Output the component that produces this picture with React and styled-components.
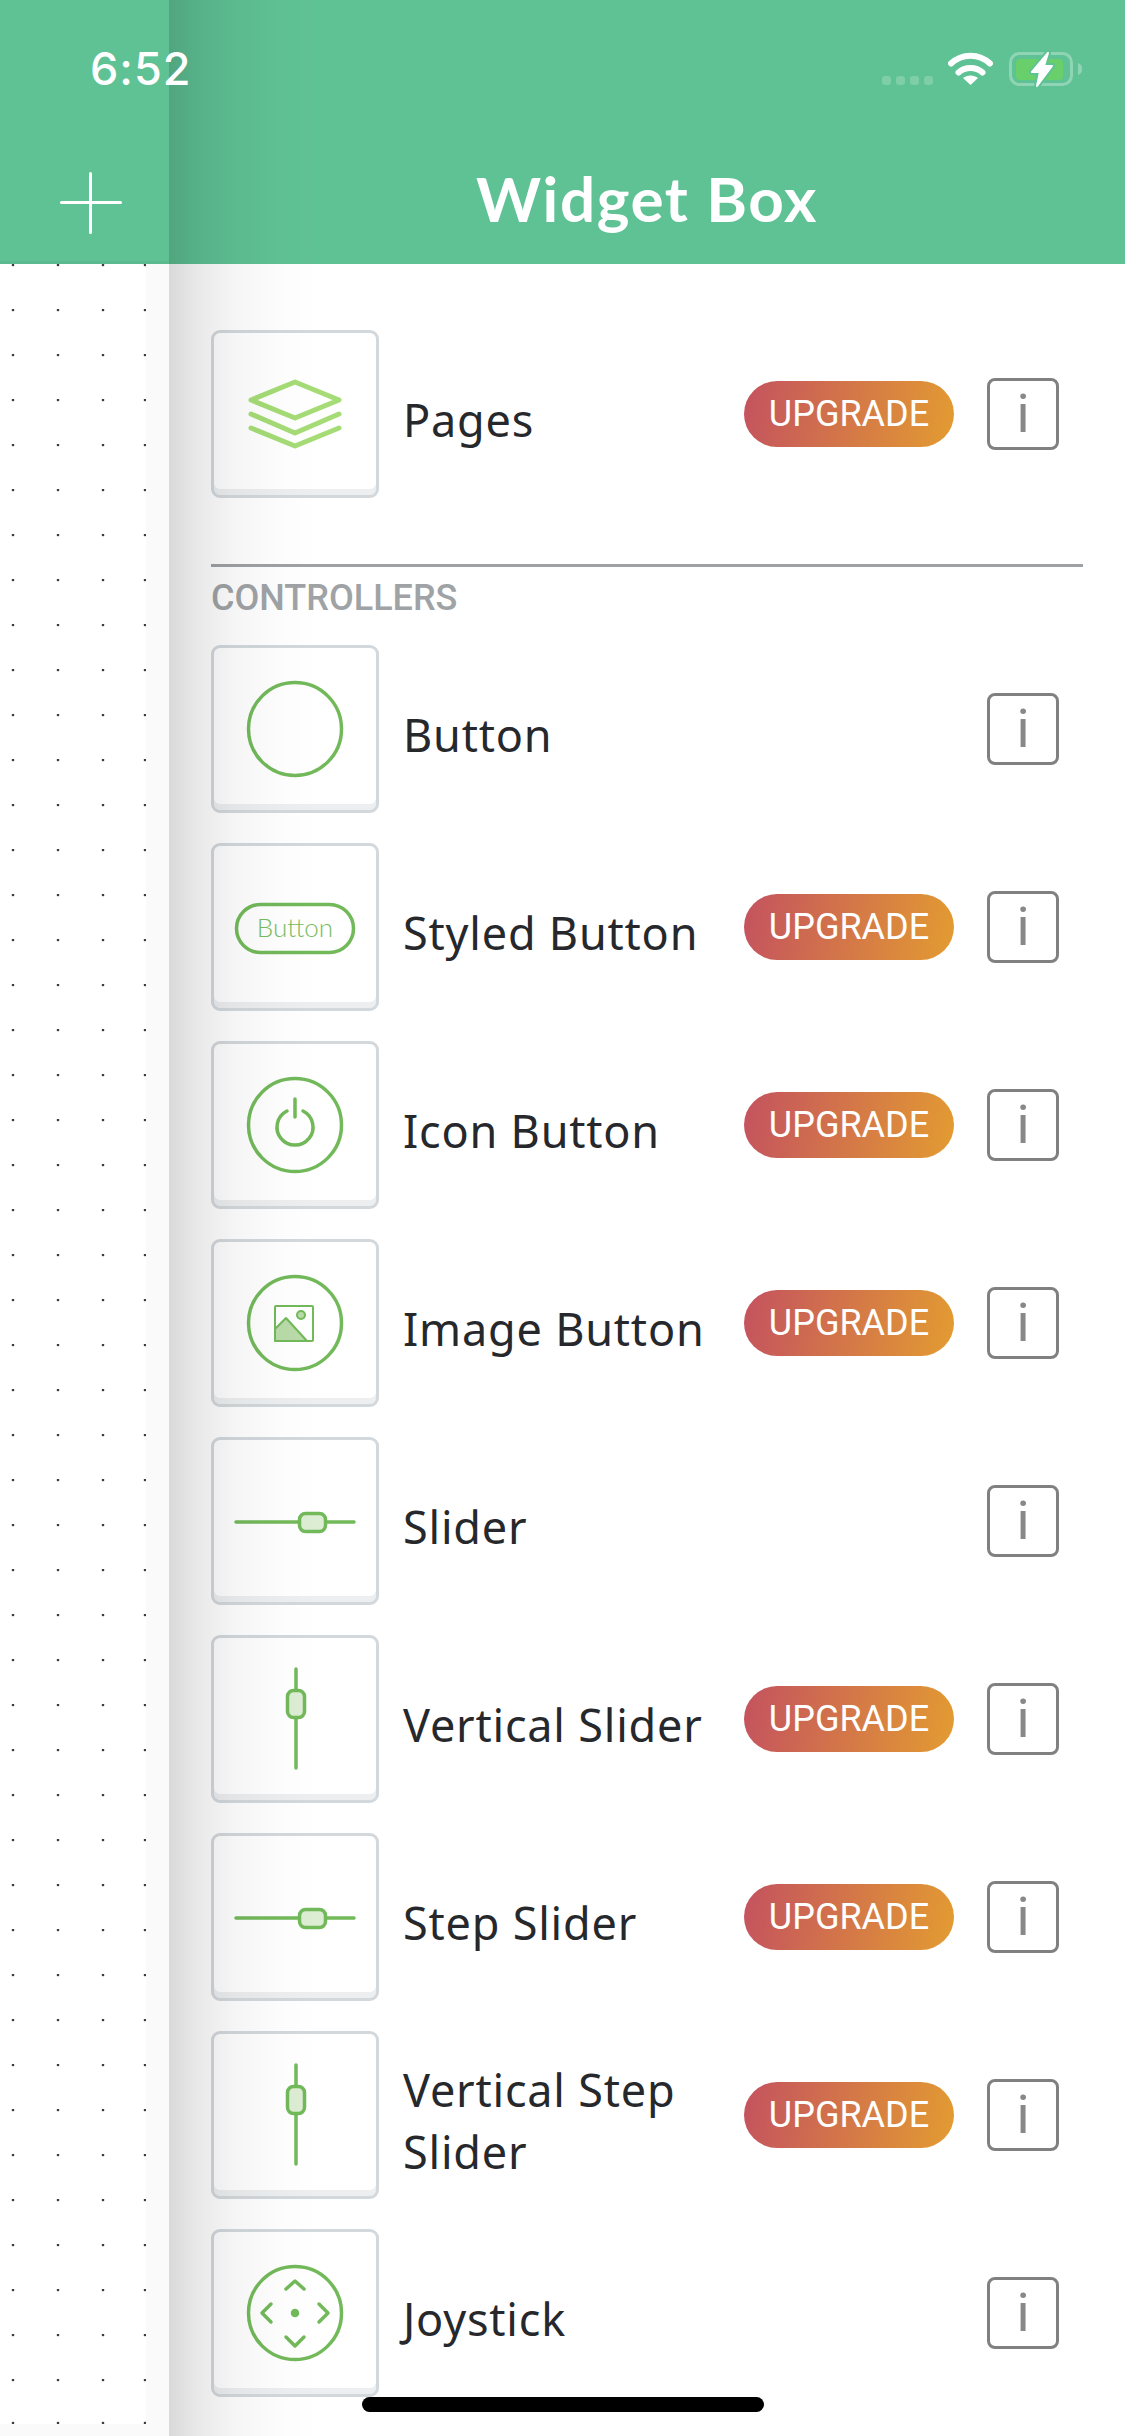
import React from "react";
import styled, { createGlobalStyle } from "styled-components";

const GlobalStyle = createGlobalStyle`
  html, body {
    margin: 0;
    padding: 0;
    background: #fff;
  }
  * {
    box-sizing: border-box;
  }
`;

const dot = (x, y) =>
  `radial-gradient(circle at ${x}px ${y}px, #3c3c3c 1px, transparent 1.7px)`;

const Screen = styled.div`
  position: relative;
  width: 1125px;
  height: 2436px;
  overflow: hidden;
  background: #fff;
  display: flex;
  flex-direction: column;
  font-family: "Noto Sans", "Open Sans", sans-serif;
`;

const Header = styled.header`
  flex: none;
  height: 264px;
  background: #5fc295;
  display: flex;
`;

const AddTab = styled.div`
  flex: none;
  width: 169px;
  height: 264px;
  padding: 172px 0 0 60px;
  border-bottom: 3px solid rgba(0, 0, 0, 0.04);
`;

const PlusIcon = styled.div`
  position: relative;
  width: 62px;
  height: 62px;
  &::before,
  &::after {
    content: "";
    position: absolute;
    background: #fff;
    border-radius: 2px;
  }
  &::before {
    left: 0;
    right: 0;
    top: 29px;
    height: 3px;
  }
  &::after {
    top: 0;
    bottom: 0;
    left: 29px;
    width: 3px;
  }
`;

const Title = styled.h1`
  flex: 1;
  margin: 0;
  padding-top: 163px;
  text-align: center;
  color: #fff;
  font-family: "Lato", sans-serif;
  font-size: 62px;
  font-weight: 700;
  letter-spacing: 1.6px;
  line-height: 70px;
`;

const StatusBar = styled.div`
  position: absolute;
  top: 0;
  left: 0;
  right: 0;
  height: 110px;
  padding: 43px 42px 0 90px;
  display: flex;
  justify-content: space-between;
  align-items: flex-start;
  color: #fff;
`;

const Time = styled.span`
  font-family: "Inter", sans-serif;
  font-size: 45px;
  font-weight: 500;
  letter-spacing: 1px;
  line-height: 52px;
`;

const StatusIcons = styled.div`
  display: flex;
  align-items: flex-start;
  margin-top: 7px;
`;

const SignalDots = styled.div`
  display: flex;
  gap: 5px;
  margin: 26px 15px 0 0;
`;

const SignalDot = styled.i`
  width: 9px;
  height: 9px;
  border-radius: 3px;
  background: rgba(255, 255, 255, 0.2);
`;

const WifiIcon = styled.svg`
  width: 45px;
  height: 35px;
  margin: 2px 16px 0 0;
`;

const BatteryIcon = styled.svg`
  width: 74px;
  height: 40px;
`;

const Body = styled.main`
  flex: 1;
  display: flex;
  min-height: 0;
`;

const Rail = styled.aside`
  flex: none;
  width: 169px;
  background: #fafafa;
`;

const DotCanvas = styled.div`
  width: 146px;
  height: 2160px;
  background-color: #fff;
  background-image: ${dot(13, 1)}, ${dot(145, 1)}, ${dot(13, 2159)},
    ${dot(145, 2159)};
  background-size: 45px 45px, 146px 45px, 45px 2160px, 146px 2160px;
`;

const Panel = styled.section`
  flex: 1;
  padding: 66px 42px 0;
`;

const PanelShadow = styled.div`
  position: absolute;
  top: 0;
  bottom: 0;
  left: 169px;
  width: 150px;
  pointer-events: none;
  background: linear-gradient(
    90deg,
    rgba(0, 0, 0, 0.15) 0,
    rgba(0, 0, 0, 0.085) 30px,
    rgba(0, 0, 0, 0.04) 65px,
    rgba(0, 0, 0, 0.012) 110px,
    rgba(0, 0, 0, 0) 150px
  );
`;

const SectionTitle = styled.h2`
  height: 81px;
  margin: 66px 0 0;
  border-top: 3px solid #9fa2a5;
  padding-top: 11px;
  color: #a0a3a6;
  font-family: "Roboto", sans-serif;
  font-size: 36px;
  font-weight: 500;
  line-height: 40px;
`;

const WidgetList = styled.div`
  display: flex;
  flex-direction: column;
  gap: 30px;
`;

const Row = styled.div`
  height: 168px;
  padding-right: 24px;
  display: flex;
  align-items: center;
`;

const Tile = styled.div`
  flex: none;
  width: 168px;
  height: 168px;
  margin-right: 24px;
  border: 3px solid #d3d8dc;
  border-radius: 9px;
  background: #fff;
  box-shadow: inset 0 -6px 0 #eceef0;
`;

const TileArt = styled.svg`
  display: block;
  width: 162px;
  height: 162px;
  fill: none;
  stroke: #72b95a;
  stroke-width: 3.5;
  stroke-linecap: round;
  stroke-linejoin: round;
`;

const Label = styled.div`
  flex: 1;
  min-width: 0;
  padding-top: 12px;
  color: #26282c;
  font-size: 45px;
  letter-spacing: 0.8px;
  line-height: 62px;
`;

const Upgrade = styled.div`
  flex: none;
  width: 210px;
  height: 66px;
  margin-left: 10px;
  border-radius: 33px;
  background: linear-gradient(100deg, #c4525f 0%, #e39c31 100%);
  color: #fff;
  font-family: "Roboto", sans-serif;
  font-size: 36px;
  line-height: 66px;
  text-align: center;
`;

const InfoButton = styled.div`
  flex: none;
  width: 72px;
  height: 72px;
  margin-left: 33px;
  border: 3px solid #808080;
  border-radius: 8px;
  color: #888;
  font-family: "Roboto", sans-serif;
  font-size: 54px;
  font-weight: 400;
  line-height: 66px;
  text-align: center;
`;

const HomeBar = styled.div`
  position: absolute;
  left: 362px;
  bottom: 24px;
  width: 402px;
  height: 15px;
  border-radius: 8px;
  background: #000;
`;

const Art = ({ children, ...rest }) => (
  <TileArt viewBox="3 3 162 162" {...rest}>
    {children}
  </TileArt>
);

const Ring = () => <circle cx="84" cy="84" r="46.5" />;

const PagesArt = () => (
  <Art style={{ stroke: "#a5dc76", strokeWidth: 5 }}>
    <path d="M40 70 84 52 128 70 84 88Z" />
    <path d="M40 84 84 103 128 84" />
    <path d="M40 98 84 116 128 98" />
  </Art>
);

const ButtonArt = () => (
  <Art>
    <Ring />
  </Art>
);

const ArtCaption = styled.text`
  fill: #78bd60;
  stroke: none;
  font-family: "Lato", sans-serif;
  font-size: 26px;
  font-weight: 300;
  text-anchor: middle;
`;

const StyledButtonArt = () => (
  <Art>
    <rect x="25.5" y="61.5" width="117" height="48" rx="24" />
    <ArtCaption x="84" y="94">
      Button
    </ArtCaption>
  </Art>
);

const IconButtonArt = () => (
  <Art>
    <Ring />
    <path d="M76 70A18 18 0 1 0 92 70" />
    <path d="M84 58V76" />
  </Art>
);

const ImageButtonArt = () => (
  <Art>
    <Ring />
    <path
      d="M64 90 75 79 96 102H64Z"
      style={{ fill: "#b9dba8", strokeWidth: 2 }}
    />
    <rect x="64" y="67" width="38" height="35" rx="1" style={{ strokeWidth: 2 }} />
    <circle cx="90" cy="76" r="4" style={{ fill: "#b9dba8", strokeWidth: 2 }} />
  </Art>
);

const SliderArt = () => (
  <Art>
    <path d="M25 85H143" />
    <rect x="88.5" y="76.5" width="26" height="18" rx="6" fill="#dcedd3" />
  </Art>
);

const VerticalSliderArt = () => (
  <Art>
    <path d="M85 34V133" />
    <rect x="76.5" y="55.5" width="17" height="27" rx="6" fill="#dcedd3" />
  </Art>
);

const JoystickArt = () => (
  <Art>
    <Ring />
    <path d="M75 60 84 52 93 60" />
    <path d="M75 108 84 117 93 108" />
    <path d="M60 75 51 84 60 93" />
    <path d="M108 75 117 84 108 93" />
    <circle cx="84" cy="84" r="2.5" fill="#72b95a" />
  </Art>
);

const controllers = [
  { name: "Button", art: ButtonArt },
  { name: "Styled Button", art: StyledButtonArt, locked: true },
  { name: "Icon Button", art: IconButtonArt, locked: true },
  { name: "Image Button", art: ImageButtonArt, locked: true },
  { name: "Slider", art: SliderArt },
  { name: "Vertical Slider", art: VerticalSliderArt, locked: true },
  { name: "Step Slider", art: SliderArt, locked: true },
  { name: "Vertical Step Slider", art: VerticalSliderArt, locked: true },
  { name: "Joystick", art: JoystickArt },
];

const WidgetRow = ({ name, art: ArtComponent, locked }) => (
  <Row>
    <Tile>
      <ArtComponent />
    </Tile>
    <Label>{name}</Label>
    {locked && <Upgrade>UPGRADE</Upgrade>}
    <InfoButton>i</InfoButton>
  </Row>
);

const BOLT = "M39 3 23 22H31L28 36 43 16H35Z";

export default function App() {
  return (
    <Screen>
      <GlobalStyle />
      <Header>
        <AddTab>
          <PlusIcon />
        </AddTab>
        <Title>Widget Box</Title>
      </Header>
      <Body>
        <Rail>
          <DotCanvas />
        </Rail>
        <Panel>
          <WidgetRow name="Pages" art={PagesArt} locked />
          <SectionTitle>CONTROLLERS</SectionTitle>
          <WidgetList>
            {controllers.map((widget) => (
              <WidgetRow key={widget.name} {...widget} />
            ))}
          </WidgetList>
        </Panel>
      </Body>
      <PanelShadow />
      <StatusBar>
        <Time>6:52</Time>
        <StatusIcons>
          <SignalDots>
            <SignalDot />
            <SignalDot />
            <SignalDot />
            <SignalDot />
          </SignalDots>
          <WifiIcon viewBox="0 0 45 35">
            <path
              d="M3 11.5C14 1 31 1 42 11.5"
              fill="none"
              stroke="#fff"
              strokeWidth="6"
              strokeLinecap="round"
            />
            <path
              d="M10.5 20.5C17 14.5 28 14.5 34.5 20.5"
              fill="none"
              stroke="#fff"
              strokeWidth="6"
              strokeLinecap="round"
            />
            <path d="M22.5 33 15 26C19 22.5 26 22.5 30 26Z" fill="#fff" />
          </WifiIcon>
          <BatteryIcon viewBox="0 0 74 40">
            <rect
              x="1.5"
              y="3.5"
              width="61"
              height="31"
              rx="9"
              fill="none"
              stroke="rgba(255,255,255,0.3)"
              strokeWidth="3"
            />
            <rect x="7" y="9" width="47" height="21" rx="4" fill="#68cf6a" />
            <path
              d="M69 13C72 14 73 16 73 19S72 24 69 25Z"
              fill="rgba(255,255,255,0.3)"
            />
            <path
              d={BOLT}
              fill="#5fc295"
              stroke="#5fc295"
              strokeWidth="6"
              strokeLinejoin="round"
            />
            <path
              d={BOLT}
              fill="#fff"
              stroke="#fff"
              strokeWidth="2"
              strokeLinejoin="round"
            />
          </BatteryIcon>
        </StatusIcons>
      </StatusBar>
      <HomeBar />
    </Screen>
  );
}
